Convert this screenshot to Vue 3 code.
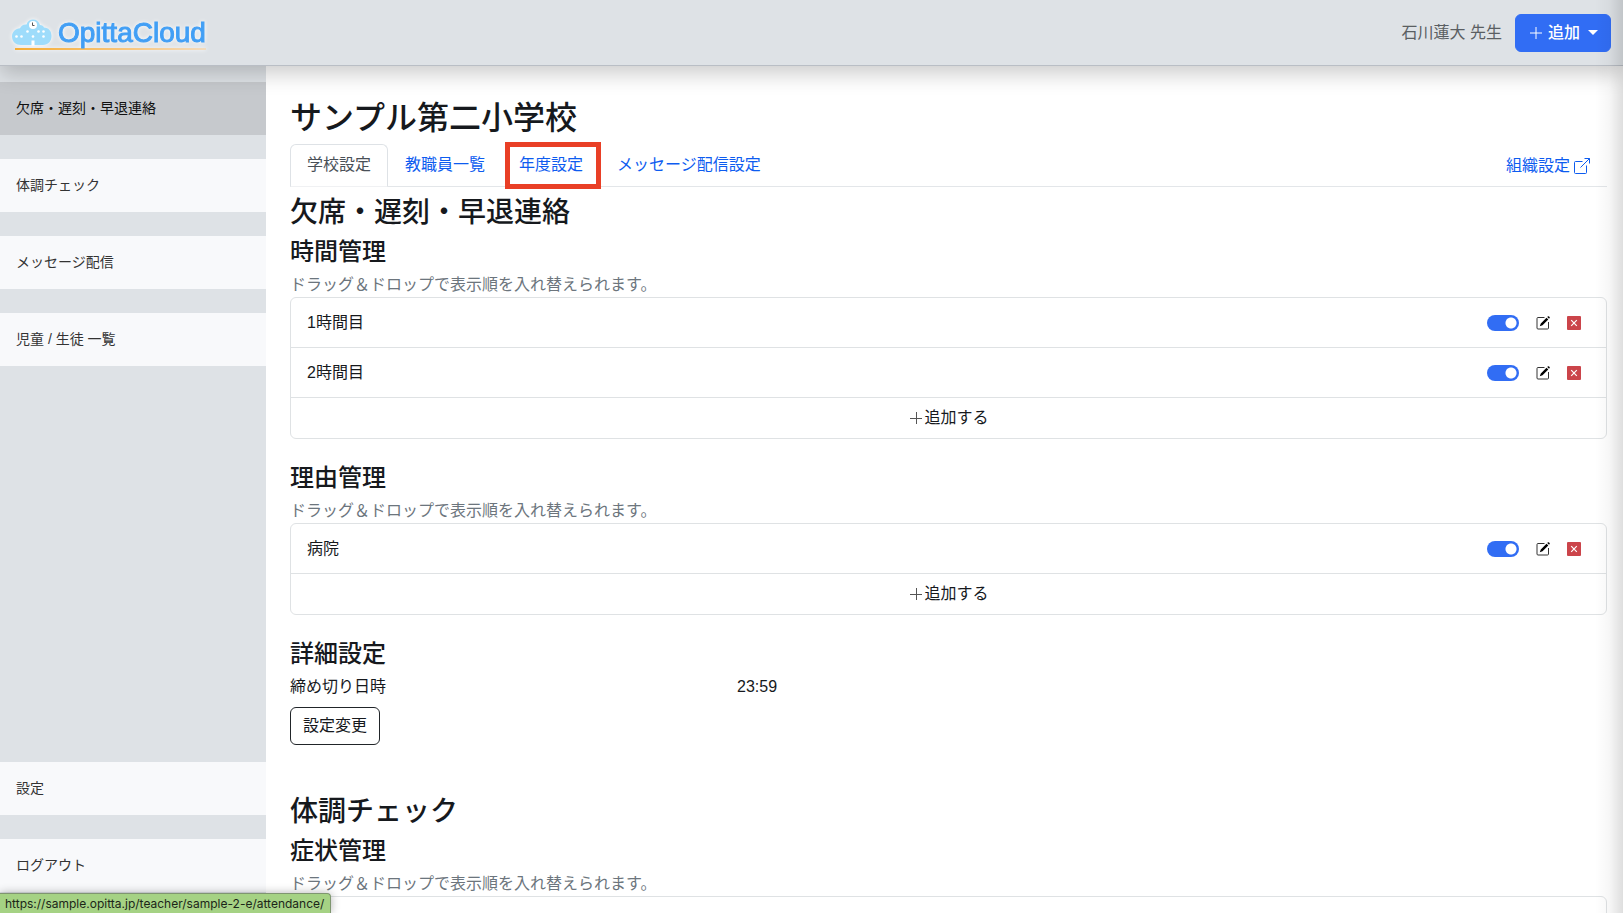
<script setup>
import { reactive, ref } from 'vue'

const mainNav = [
  { label: '欠席・遅刻・早退連絡', active: true },
  { label: '体調チェック' },
  { label: 'メッセージ配信' },
  { label: '児童 / 生徒 一覧' }
]
const subNav = [{ label: '設定' }, { label: 'ログアウト' }]
const tabs = ['学校設定', '教職員一覧', '年度設定', 'メッセージ配信設定']
const activeTab = ref('学校設定')
const hint = 'ドラッグ＆ドロップで表示順を入れ替えられます。'
const groups = reactive([
  {
    title: '時間管理',
    items: [
      { name: '1時間目', enabled: true },
      { name: '2時間目', enabled: true }
    ]
  },
  { title: '理由管理', items: [{ name: '病院', enabled: true }] }
])
</script>

<template>
  <div class="app" lang="ja">
    <header class="header">
      <a class="brand" href="#">
        <svg class="cloud" viewBox="0 0 40 27" aria-hidden="true">
          <path
            fill="#9edcfb"
            d="M9 26C4 26 0 22.500 0 17.500C0 13 3.500 9.500 8 9.300C9 6.500 12 5 14.500 5.500C15.500 2 18 .5 21 .5C24.500 .5 27 2.500 28 6C30 6 31.500 7 32 8.500C36.500 8.500 39.500 12 39.500 17C39.500 22.500 36 26 31 26Z"
          />
          <circle cx="21" cy="6" r="4" fill="#fff" />
          <path d="M20.500 3.500V6.500H22.500" fill="none" stroke="#555" stroke-width="1" />
          <g fill="#fff">
            <circle cx="15.500" cy="12.500" r="1.300" /><circle cx="26.500" cy="12.500" r="1.300" />
            <circle cx="31.500" cy="12.500" r="1.300" /><circle cx="4.500" cy="17.500" r="1.300" />
            <circle cx="9.500" cy="17.500" r="1.300" /><circle cx="21" cy="17.500" r="1.300" />
            <circle cx="31.500" cy="17.500" r="1.300" /><rect x="19.500" y="21.500" width="3" height="5" />
          </g>
        </svg>
        <span>OpittaCloud</span>
      </a>
      <div class="account">
        <span class="user">石川蓮大 先生</span>
        <button class="add-menu" type="button" aria-haspopup="true">
          <svg class="icon" viewBox="0 0 16 16" aria-hidden="true">
            <path d="M8 2V14M2 8H14" stroke="currentColor" stroke-width="1" />
          </svg>
          <span>追加</span>
          <i class="caret"></i>
        </button>
      </div>
    </header>

    <div class="body">
      <nav class="sidebar">
        <div class="nav-group">
          <a v-for="n in mainNav" :key="n.label" href="#" class="nav-item" :class="{ active: n.active }">{{ n.label }}</a>
        </div>
        <div class="nav-group">
          <a v-for="n in subNav" :key="n.label" href="#" class="nav-item">{{ n.label }}</a>
        </div>
      </nav>

      <main class="main">
        <h1>サンプル第二小学校</h1>
        <div class="tabs">
          <a
            v-for="t in tabs"
            :key="t"
            href="#"
            class="tab"
            :class="{ active: t === activeTab, marked: t === '年度設定' }"
            @click.prevent="activeTab = t"
          >{{ t }}</a>
          <a class="tab external" href="#">
            組織設定
            <svg class="icon" viewBox="0 0 16 16" fill="none" stroke="currentColor" aria-hidden="true">
              <path d="M8.500 3.500H1.500Q.5 3.500 .5 4.500V14.500Q.5 15.500 1.500 15.500H11.500Q12.500 15.500 12.500 14.500V7.500M10.500 .5H15.500V5.500M15.500 .5L6.500 9.500" />
            </svg>
          </a>
        </div>

        <h2>欠席・遅刻・早退連絡</h2>
        <section v-for="g in groups" :key="g.title" class="section">
          <h3>{{ g.title }}</h3>
          <p class="hint">{{ hint }}</p>
          <ul class="list">
            <li v-for="item in g.items" :key="item.name" class="row">
              <span>{{ item.name }}</span>
              <span class="actions">
                <input v-model="item.enabled" class="switch" type="checkbox" role="switch" :aria-label="item.name" />
                <button class="icon-button edit" type="button" :aria-label="item.name + 'を編集'">
                  <svg viewBox="0 0 14 14" aria-hidden="true">
                    <path d="M8.500 1.500H2Q1 1.500 1 2.500V12Q1 13 2 13H11.500Q12.500 13 12.500 12V6" fill="none" stroke="#333" />
                    <path d="M10.500 1.700L12.300 3.500L6.500 9.300L3.800 10.300L4.800 7.400ZM11.300 .9L12 .3Q12.500 0 13 .5L13.600 1.100Q14 1.600 13.600 2.100L13 2.700Z" fill="#000" />
                  </svg>
                </button>
                <button class="icon-button" type="button" :aria-label="item.name + 'を削除'">
                  <svg viewBox="0 0 14 14" aria-hidden="true">
                    <rect width="14" height="14" rx="1" fill="#cb444a" />
                    <path d="M4.200 4.200L9.800 9.800M9.800 4.200L4.200 9.800" stroke="#fff" stroke-width="1.200" />
                  </svg>
                </button>
              </span>
            </li>
            <li>
              <button class="add-row" type="button">
                <svg class="icon" viewBox="0 0 16 16" aria-hidden="true">
                  <path d="M8.500 2V14M2 8.500H14" stroke="#555" stroke-width="1" />
                </svg>追加する
              </button>
            </li>
          </ul>
        </section>

        <section class="section">
          <h3>詳細設定</h3>
          <dl class="details">
            <dt>締め切り日時</dt>
            <dd>23:59</dd>
          </dl>
          <button class="outline" type="button">設定変更</button>
        </section>

        <h2 class="next">体調チェック</h2>
        <section class="section">
          <h3>症状管理</h3>
          <p class="hint">{{ hint }}</p>
          <ul class="list"><li class="row"></li></ul>
        </section>
      </main>
    </div>

    <div class="edge"></div>
    <div class="status">https://sample.opitta.jp/teacher/sample-2-e/attendance/</div>
  </div>
</template>

<style>
body {
  margin: 0;
}
</style>

<style scoped>
* {
  box-sizing: border-box;
}
.app {
  position: relative;
  display: flex;
  flex-direction: column;
  height: 100vh;
  overflow: hidden;
  background: #fff;
  color: #16191d;
  font: 16px/24px "Liberation Sans", "Noto Sans CJK JP", sans-serif;
}
a {
  color: #0d5cf0;
  text-decoration: none;
}
button {
  font: inherit;
  color: inherit;
  cursor: pointer;
}
.icon {
  width: 16px;
  height: 16px;
  flex: none;
}
.header {
  position: relative;
  z-index: 2;
  flex: none;
  display: flex;
  align-items: center;
  justify-content: space-between;
  height: 66px;
  padding: 0 12px;
  background: #dee2e6;
  border-bottom: 1px solid #b9bec5;
  box-shadow: 0 8px 20px rgba(0, 0, 0, 0.2);
}
.brand {
  display: flex;
  align-items: center;
  gap: 6px;
  height: 34px;
  color: #429ff5;
  font-size: 28px;
  line-height: 32px;
  -webkit-text-stroke: 1px #429ff5;
  filter: drop-shadow(0 0 2px #fff);
  background: linear-gradient(90deg, #f6ad35, #f8c780 60%, #f2dcc0) 3px 100% / 100% 2px no-repeat;
}
.cloud {
  width: 40px;
  height: 27px;
}
.account {
  display: flex;
  align-items: center;
  gap: 13px;
}
.user {
  color: #5a5e62;
}
.add-menu {
  display: flex;
  align-items: center;
  height: 38px;
  padding: 0 12px;
  color: #fff;
  font-weight: 500;
  background: #316df4;
  border: 1px solid #316df4;
  border-radius: 6px;
}
.add-menu span {
  margin: 0 8px 0 4px;
}
.caret {
  border: 5px solid transparent;
  border-top-color: #fff;
  border-bottom: 0;
}
.body {
  display: flex;
  flex: 1;
  min-height: 0;
}
.sidebar {
  flex: 0 0 266px;
  display: flex;
  flex-direction: column;
  justify-content: space-between;
  padding: 16px 0 21px;
  background: #dee2e6;
}
.nav-group {
  display: grid;
  gap: 24px;
}
.nav-item {
  padding: 16px;
  color: #333;
  font-size: 14px;
  line-height: 21px;
  background: #f8f9fb;
}
.nav-item.active {
  color: #111;
  background: #c6c9cd;
}
.main {
  flex: 1;
  min-width: 0;
  padding: 32px 16px 0 24px;
  overflow: hidden;
}
h1,
h2,
h3 {
  margin: 0 0 6px;
  font-weight: 500;
}
h1 {
  font-size: 32px;
  line-height: 40px;
}
h2 {
  font-size: 28px;
  line-height: 36px;
}
h3 {
  font-size: 24px;
  line-height: 30px;
}
.tabs {
  display: flex;
  height: 43px;
  margin-bottom: 8px;
  border-bottom: 1px solid #e3e6e9;
}
.tab {
  position: relative;
  height: 43px;
  padding: 8px 16px;
  border: 1px solid transparent;
  border-radius: 6px 6px 0 0;
}
.tab.active {
  color: #495057;
  background: #fff;
  border-color: #dee2e6 #dee2e6 #f0f1f3;
}
.tab.marked::after {
  content: "";
  position: absolute;
  inset: -3px -2px -3px 2px;
  border: 5px solid #e93f26;
}
.external {
  display: flex;
  align-items: center;
  gap: 4px;
  margin-left: auto;
}
.section + .section {
  margin-top: 24px;
}
.hint {
  margin: 0;
  color: #6c757d;
}
.list {
  margin: 0;
  padding: 0;
  list-style: none;
  border: 1px solid #dfe2e4;
  border-radius: 6px;
}
.row {
  display: flex;
  align-items: center;
  justify-content: space-between;
  min-height: 50px;
  padding: 0 25px 0 16px;
  border-bottom: 1px solid #dfe2e4;
}
.actions {
  display: flex;
  align-items: center;
  gap: 17px;
}
.switch {
  appearance: none;
  width: 32px;
  height: 16px;
  margin: 0;
  border-radius: 8px;
  background: radial-gradient(circle at 24px 8px, #fff 5px, #316df4 6px);
}
.switch:not(:checked) {
  background: radial-gradient(circle at 8px 8px, #fff 5px, #adb5bd 6px);
}
.icon-button {
  display: flex;
  width: 14px;
  height: 14px;
  padding: 0;
  background: none;
  border: 0;
}
.add-row {
  display: flex;
  align-items: center;
  justify-content: center;
  width: 100%;
  height: 40px;
  padding: 0;
  background: none;
  border: 0;
}
.details {
  display: grid;
  grid-template-columns: 1fr 2fr;
  gap: 12px;
  margin: 0 0 8px;
}
.details dd {
  margin: 0;
}
.outline {
  display: block;
  height: 38px;
  padding: 0 12px;
  background: #fff;
  border: 1px solid #212529;
  border-radius: 6px;
}
.next {
  margin-top: 49px;
}
.edge {
  position: absolute;
  inset: 0 0 0 auto;
  z-index: 3;
  width: 28px;
  background: linear-gradient(90deg, transparent, rgba(0, 0, 0, 0.03) 50%, rgba(0, 0, 0, 0.13));
  pointer-events: none;
}
.status {
  position: absolute;
  left: 0;
  bottom: 0;
  z-index: 4;
  height: 20px;
  padding: 0 6px 0 5px;
  color: #1c2618;
  font: 12px/20px Inter, sans-serif;
  background: #a5d284;
  border-top: 1px solid #7f9670;
  border-right: 1px solid #7f9670;
  border-radius: 0 4px 0 0;
  box-shadow: 0 0 10px rgba(0, 0, 0, 0.3);
}
</style>
